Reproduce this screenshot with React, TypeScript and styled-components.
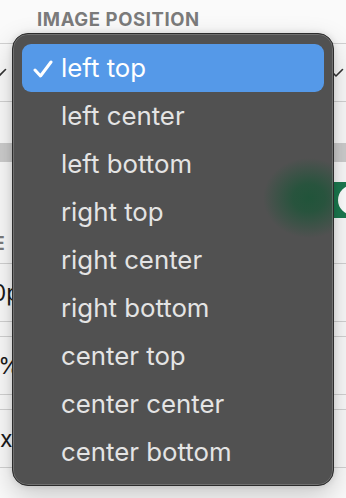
import React from "react";
import styled, { createGlobalStyle } from "styled-components";

const Global = createGlobalStyle`
  html, body { margin: 0; padding: 0; background: #fafafa; }
  body { font-family: Inter, "Noto Sans", sans-serif; }
`;

const Page = styled.div`
  position: relative;
  width: 346px;
  height: 498px;
  overflow: hidden;
  background: #fafafa;
  display: flex;
  flex-direction: column;
`;

const SectionLabel = styled.div<{ $indent: number; $top: number }>`
  margin-top: ${(p) => p.$top}px;
  margin-left: ${(p) => p.$indent}px;
  font-family: Inter, "Liberation Sans", sans-serif;
  font-weight: 700;
  font-size: 18.5px;
  line-height: 22px;
  letter-spacing: 0.6px;
  color: #7b7b7b;
  white-space: nowrap;
`;

const FieldRow = styled.div<{ $top: number }>`
  margin-top: ${(p) => p.$top}px;
  height: 57px;
  border-top: 1px solid #d2d2d2;
  border-bottom: 1px solid #d2d2d2;
  display: flex;
  align-items: center;
  justify-content: space-between;
  flex-shrink: 0;
`;

const Chevron = styled.svg<{ $shift: number }>`
  width: 16px;
  height: 10px;
  margin-left: ${(p) => p.$shift}px;
  margin-right: ${(p) => -p.$shift}px;
  flex-shrink: 0;
`;

const Band = styled.div<{ $top: number }>`
  margin-top: ${(p) => p.$top}px;
  height: 19px;
  background: #cdcdcd;
  flex-shrink: 0;
`;

const ToggleRow = styled.div<{ $top: number }>`
  margin-top: ${(p) => p.$top}px;
  height: 36px;
  display: flex;
  justify-content: flex-end;
  flex-shrink: 0;
`;

const Track = styled.div`
  width: 90px;
  height: 36px;
  margin-right: -25px;
  border-radius: 18px;
  background: #1c7a50;
  display: flex;
  justify-content: flex-end;
  align-items: center;
  padding: 0 3px;
  box-sizing: border-box;
`;

const Knob = styled.div`
  width: 30px;
  height: 30px;
  border-radius: 50%;
  background: #ffffff;
`;

const ValueText = styled.span<{ $shift: number }>`
  margin-left: ${(p) => p.$shift}px;
  font-family: Inter, "Liberation Sans", sans-serif;
  font-size: 23px;
  color: #1a1a1a;
  white-space: nowrap;
`;

const Menu = styled.div`
  position: absolute;
  left: 12px;
  top: 33px;
  width: 322px;
  height: 453px;
  box-sizing: border-box;
  padding: 10px 9px 11px;
  border-radius: 16px;
  border: 1px solid #2c2c2c;
  background:
    radial-gradient(ellipse 46px 40px at 296px 164px,
      rgba(33, 84, 58, 1) 0%,
      rgba(33, 84, 58, 0.85) 35%,
      rgba(81, 81, 81, 0) 100%),
    #515151;
  box-shadow: inset 0 0 0 1px rgba(255, 255, 255, 0.18),
    0 10px 28px rgba(0, 0, 0, 0.2), 0 0 6px rgba(0, 0, 0, 0.12);
  display: flex;
  flex-direction: column;
`;

const Item = styled.div<{ $selected?: boolean }>`
  height: 48px;
  flex-shrink: 0;
  display: flex;
  align-items: center;
  border-radius: 9px;
  padding-left: 11px;
  background: ${(p) => (p.$selected ? "#5599e8" : "transparent")};
  color: ${(p) => (p.$selected ? "#ffffff" : "#e4e4e4")};
  font-family: Inter, "Noto Sans", sans-serif;
  font-size: 25.8px;
  line-height: 48px;
  white-space: nowrap;
`;

const CheckSlot = styled.span`
  width: 28px;
  display: flex;
  align-items: center;
  margin-top: 2px;
`;

const options = [
  "left top",
  "left center",
  "left bottom",
  "right top",
  "right center",
  "right bottom",
  "center top",
  "center center",
  "center bottom",
];

const ChevronIcon = ({ shift }: { shift: number }) => (
  <Chevron $shift={shift} viewBox="0 0 16 10">
    <path d="M1.5 1.5 L8 8 L14.5 1.5" fill="none" stroke="#333" strokeWidth="1.6" strokeLinecap="round" strokeLinejoin="round" />
  </Chevron>
);

export default function App() {
  return (
    <>
      <Global />
      <Page>
        <SectionLabel $indent={37} $top={8}>IMAGE POSITION</SectionLabel>
        <FieldRow $top={13}>
          <ChevronIcon shift={-9} />
          <ChevronIcon shift={-2} />
        </FieldRow>
        <Band $top={41} />
        <ToggleRow $top={20}>
          <Track>
            <Knob />
          </Track>
        </ToggleRow>
        <SectionLabel $indent={-38} $top={14}>SIZE</SectionLabel>
        <FieldRow $top={9}>
          <ValueText $shift={-32}>100px</ValueText>
        </FieldRow>
        <FieldRow $top={14}>
          <ValueText $shift={-40}>100%</ValueText>
        </FieldRow>
        <FieldRow $top={14}>
          <ValueText $shift={-28}>0px</ValueText>
        </FieldRow>
        <Menu>
          {options.map((o, i) => (
            <Item key={o} $selected={i === 0}>
              <CheckSlot>
                {i === 0 && (
                  <svg width="20" height="18" viewBox="0 0 20 18">
                    <path d="M2 10 L7.5 16 L18 2" fill="none" stroke="#fff" strokeWidth="3" strokeLinecap="round" strokeLinejoin="round" />
                  </svg>
                )}
              </CheckSlot>
              {o}
            </Item>
          ))}
        </Menu>
      </Page>
    </>
  );
}
